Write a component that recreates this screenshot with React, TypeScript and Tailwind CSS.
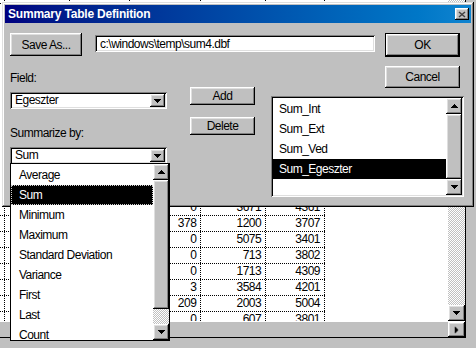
import React from "react";

const raised =
  "bg-[#c0c0c0] shadow-[inset_-1px_-1px_#000,inset_1px_1px_#fff,inset_-2px_-2px_#808080,inset_2px_2px_#dfdfdf]";
const sunken =
  "bg-white shadow-[inset_1px_1px_#808080,inset_-1px_-1px_#fff,inset_2px_2px_#000,inset_-2px_-2px_#dfdfdf]";
const dither =
  "bg-[repeating-conic-gradient(#c0c0c0_0_25%,#ffffff_0_50%)] bg-[length:2px_2px]";

// little pixel triangle, points down
const Arrow = ({ right = false }: { right?: boolean }) => (
  <svg width="7" height="4" viewBox="0 0 7 4" className={right ? "-rotate-90" : ""}>
    <path d="M0 0h7v1h-1v1h-1v1h-1v1h-1v-1h-1v-1h-1v-1h-1z" fill="#000" />
  </svg>
);

const UpArrow = () => (
  <svg width="7" height="4" viewBox="0 0 7 4">
    <path d="M3 0h1v1h1v1h1v1h1v1h-7v-1h1v-1h1v-1h1z" fill="#000" />
  </svg>
);

const Button = ({ label, className }: { label: string; className: string }) => (
  <div className={`${raised} flex items-center justify-center ${className}`}>{label}</div>
);

const Combo = ({ value, className }: { value: string; className: string }) => (
  <div className={`${sunken} flex p-[2px] ${className}`}>
    <div className="flex-1 pl-[3px] flex items-center leading-[13px]">{value}</div>
    <div className={`${raised} w-[15px] flex items-center justify-center`}>
      <Arrow />
    </div>
  </div>
);

const cols = ["w-[4px]", "w-[65px]", "w-[60px]", "w-[72px]", "w-[65px]", "w-[59px]"];

const TableRow = ({ cells }: { cells: string[] }) => (
  <div className="flex h-[16px] w-[325px] border-b border-dotted border-black">
    {cols.map((w, i) => (
      <div
        key={i}
        className={`${w} h-full border-r border-dotted border-black text-right pr-[4px] leading-[15px]`}
      >
        {cells[i] ?? ""}
      </div>
    ))}
  </div>
);

const tableRows = [
  ["", "", "", "0", "3671", "4361"],
  ["", "", "", "378", "1200", "3707"],
  ["", "", "", "0", "5075", "3401"],
  ["", "", "", "0", "713", "3802"],
  ["", "", "", "0", "1713", "4309"],
  ["", "", "", "3", "3584", "4201"],
  ["", "", "", "209", "2003", "5004"],
  ["", "", "", "0", "607", "3801"],
];

const summaries = ["Average", "Sum", "Minimum", "Maximum", "Standard Deviation", "Variance", "First", "Last", "Count"];
const fields = ["Sum_Int", "Sum_Ext", "Sum_Ved", "Sum_Egeszter"];

export default function App() {
  return (
    <div className="relative w-[476px] h-[348px] overflow-hidden bg-[#c0c0c0] text-black text-[12px] tracking-[-0.5px] font-['Liberation_Sans',Arial,sans-serif]">
      {/* table window behind */}
      <div className="flex flex-col w-[466px] h-[338px] bg-white border-r border-b border-black">
        <div className="flex-1 flex min-h-0">
          <div className="flex-1 overflow-hidden">
            <div className="-mt-[12px]">
              <TableRow cells={["", "0", "1104", "1310", "2434", "4363"]} />
              <div className="h-[196px]" />
              {tableRows.map((r, i) => (
                <TableRow key={i} cells={r} />
              ))}
            </div>
          </div>
          <div className="w-[17px] flex flex-col">
            <div className={`flex-1 ${dither}`} />
            <div className={`${raised} h-[16px] flex items-center justify-center`}>
              <Arrow />
            </div>
          </div>
        </div>
        <div className="h-[16px] flex border-t border-white">
          <div className="flex-1 bg-[#c0c0c0]" />
          <div className={`${raised} w-[17px] flex items-center justify-center`}>
            <Arrow right />
          </div>
        </div>
      </div>

      {/* dialog */}
      <div className="absolute left-[2px] top-[2px] w-[472px] h-[205px] p-[3px] bg-[#c0c0c0] shadow-[inset_-1px_-1px_#000,inset_1px_1px_#dfdfdf,inset_-2px_-2px_#808080,inset_2px_2px_#fff]">
        <div className="h-[18px] flex items-center bg-gradient-to-r from-[#000080] to-[#1084d0] pl-[3px] pr-[2px]">
          <span className="flex-1 text-white font-bold text-[12px] tracking-[-0.2px] leading-[14px]">
            Summary Table Definition
          </span>
          <div className={`${raised} w-[14px] h-[12px] flex items-center justify-center`}>
            <svg width="8" height="7" viewBox="0 0 8 7">
              <path d="M1 1L7 6M7 1L1 6" stroke="#404040" strokeWidth="1.5" />
            </svg>
          </div>
        </div>

        <div className="pl-[5px]">
          <div className="flex items-start mt-[10px]">
            <Button label="Save As..." className="w-[72px] h-[23px]" />
            <div className={`${sunken} ml-[13px] mt-[2px] w-[280px] h-[17px] pl-[5px] flex items-center`}>
              {"c:\\windows\\temp\\sum4.dbf"}
            </div>
            <div className="ml-[10px] w-[75px] h-[24px] border border-black">
              <Button label="OK" className="w-full h-full" />
            </div>
          </div>

          <div className="flex items-start">
            <div className="w-[157px] flex flex-col">
              <div className="mt-[15px] leading-[13px]">Field:</div>
              <Combo value="Egeszter" className="mt-[7px] h-[17px]" />
              <div className="mt-[18px] leading-[13px]">Summarize by:</div>
              <Combo value="Sum" className="mt-[7px] h-[17px]" />
            </div>

            <div className="ml-[23px] w-[65px] flex flex-col">
              <Button label="Add" className="mt-[30px] h-[18px]" />
              <Button label="Delete" className="mt-[12px] h-[18px]" />
            </div>

            <div className="ml-[16px] w-[193px] flex flex-col">
              <Button label="Cancel" className="ml-[114px] mt-[9px] w-[75px] h-[22px]" />
              <div className={`${sunken} mt-[8px] h-[101px] p-[2px] flex`}>
                <div className="flex-1 pt-[1px]">
                  {fields.map((f, i) => (
                    <div
                      key={f}
                      className={`h-[20px] pl-[6px] flex items-center ${i === 3 ? "bg-black text-white" : ""}`}
                    >
                      {f}
                    </div>
                  ))}
                </div>
                <div className="w-[16px] flex flex-col">
                  <div className={`${raised} h-[16px] flex items-center justify-center`}>
                    <UpArrow />
                  </div>
                  <div className={`${raised} flex-1`} />
                  <div className={`${raised} h-[16px] flex items-center justify-center`}>
                    <Arrow />
                  </div>
                </div>
              </div>
            </div>
          </div>
        </div>
      </div>

      {/* open drop-down of Summarize by */}
      <div className="absolute left-[10px] top-[163px] w-[160px] h-[178px] border border-black bg-white flex">
        <div className="flex-1 pt-[1px]">
          {summaries.map((s) => (
            <div
              key={s}
              className={`h-[20px] flex items-center ${
                s === "Sum" ? "bg-black text-white border border-dotted border-[#d0d0d0] pl-[7px]" : "pl-[8px]"
              }`}
            >
              {s}
            </div>
          ))}
        </div>
        <div className="w-[16px] flex flex-col">
          <div className={`${raised} h-[16px] flex items-center justify-center`}>
            <UpArrow />
          </div>
          <div className={`${raised} h-[129px]`} />
          <div className={`flex-1 ${dither}`} />
          <div className={`${raised} h-[16px] flex items-center justify-center`}>
            <Arrow />
          </div>
        </div>
      </div>
    </div>
  );
}
